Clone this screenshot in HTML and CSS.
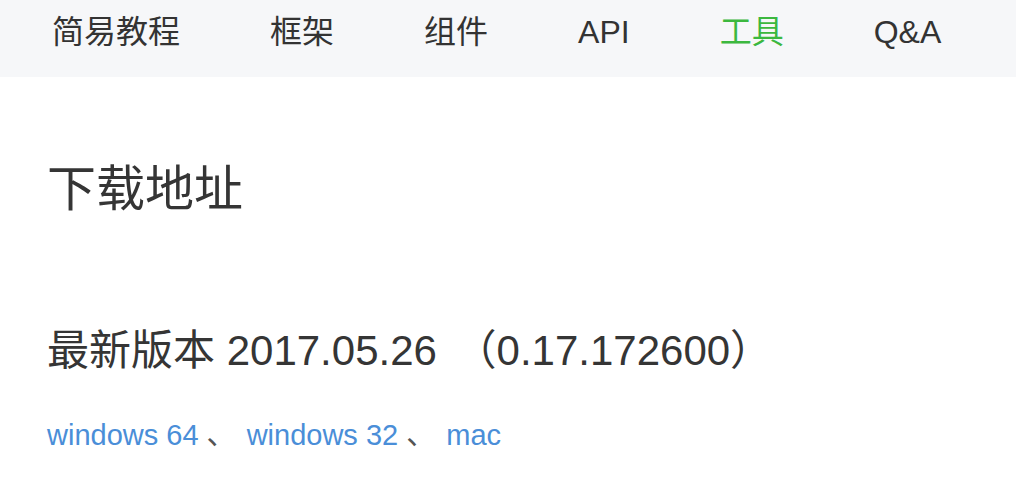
FILE: index.html
```html
<!DOCTYPE html>
<html lang="zh-CN">
<head>
<meta charset="utf-8">
<link rel="stylesheet" href="styles.css">
</head>
<body>
<nav class="nav">
  <a class="nav-item">简易教程</a>
  <a class="nav-item">框架</a>
  <a class="nav-item">组件</a>
  <a class="nav-item">API</a>
  <a class="nav-item active">工具</a>
  <a class="nav-item">Q&amp;A</a>
</nav>
<main class="content">
  <h1 class="title">下载地址</h1>
  <h2 class="version">最新版本 2017.05.26 <span class="build">（0.17.172600）</span></h2>
  <p class="links"><a class="link">windows 64</a><span class="sep"> 、 </span><a class="link">windows 32</a><span class="sep"> 、 </span><a class="link">mac</a></p>
</main>
</body>
</html>
```

FILE: styles.css
```css
html, body {
  margin: 0;
  padding: 0;
  background: #ffffff;
  font-family: "Liberation Sans", "Noto Sans CJK SC", sans-serif;
  color: #353535;
}
.nav {
  display: flex;
  gap: 90px;
  height: 77px;
  box-sizing: border-box;
  padding: 16px 0 0 52px;
  background: #f6f7f9;
}
.nav-item {
  font-size: 32px;
  line-height: 32px;
  color: #333333;
  text-decoration: none;
}
.nav-item.active {
  color: #3cb83f;
}
.content {
  padding: 0 0 0 47px;
}
.title {
  margin: 88px 0 0 0;
  font-size: 49px;
  line-height: 49px;
  font-weight: normal;
  color: #353535;
}
.version {
  margin: 116px 0 0 0;
  font-size: 42px;
  line-height: 42px;
  font-weight: normal;
  color: #353535;
}
.build {
  margin-left: 6px;
}
.links {
  margin: 49px 0 0 0;
  font-size: 29px;
  line-height: 29px;
  color: #555555;
}
.sep {
  margin-right: 3px;
}
.link {
  color: #4a8ed8;
  text-decoration: none;
}
```
